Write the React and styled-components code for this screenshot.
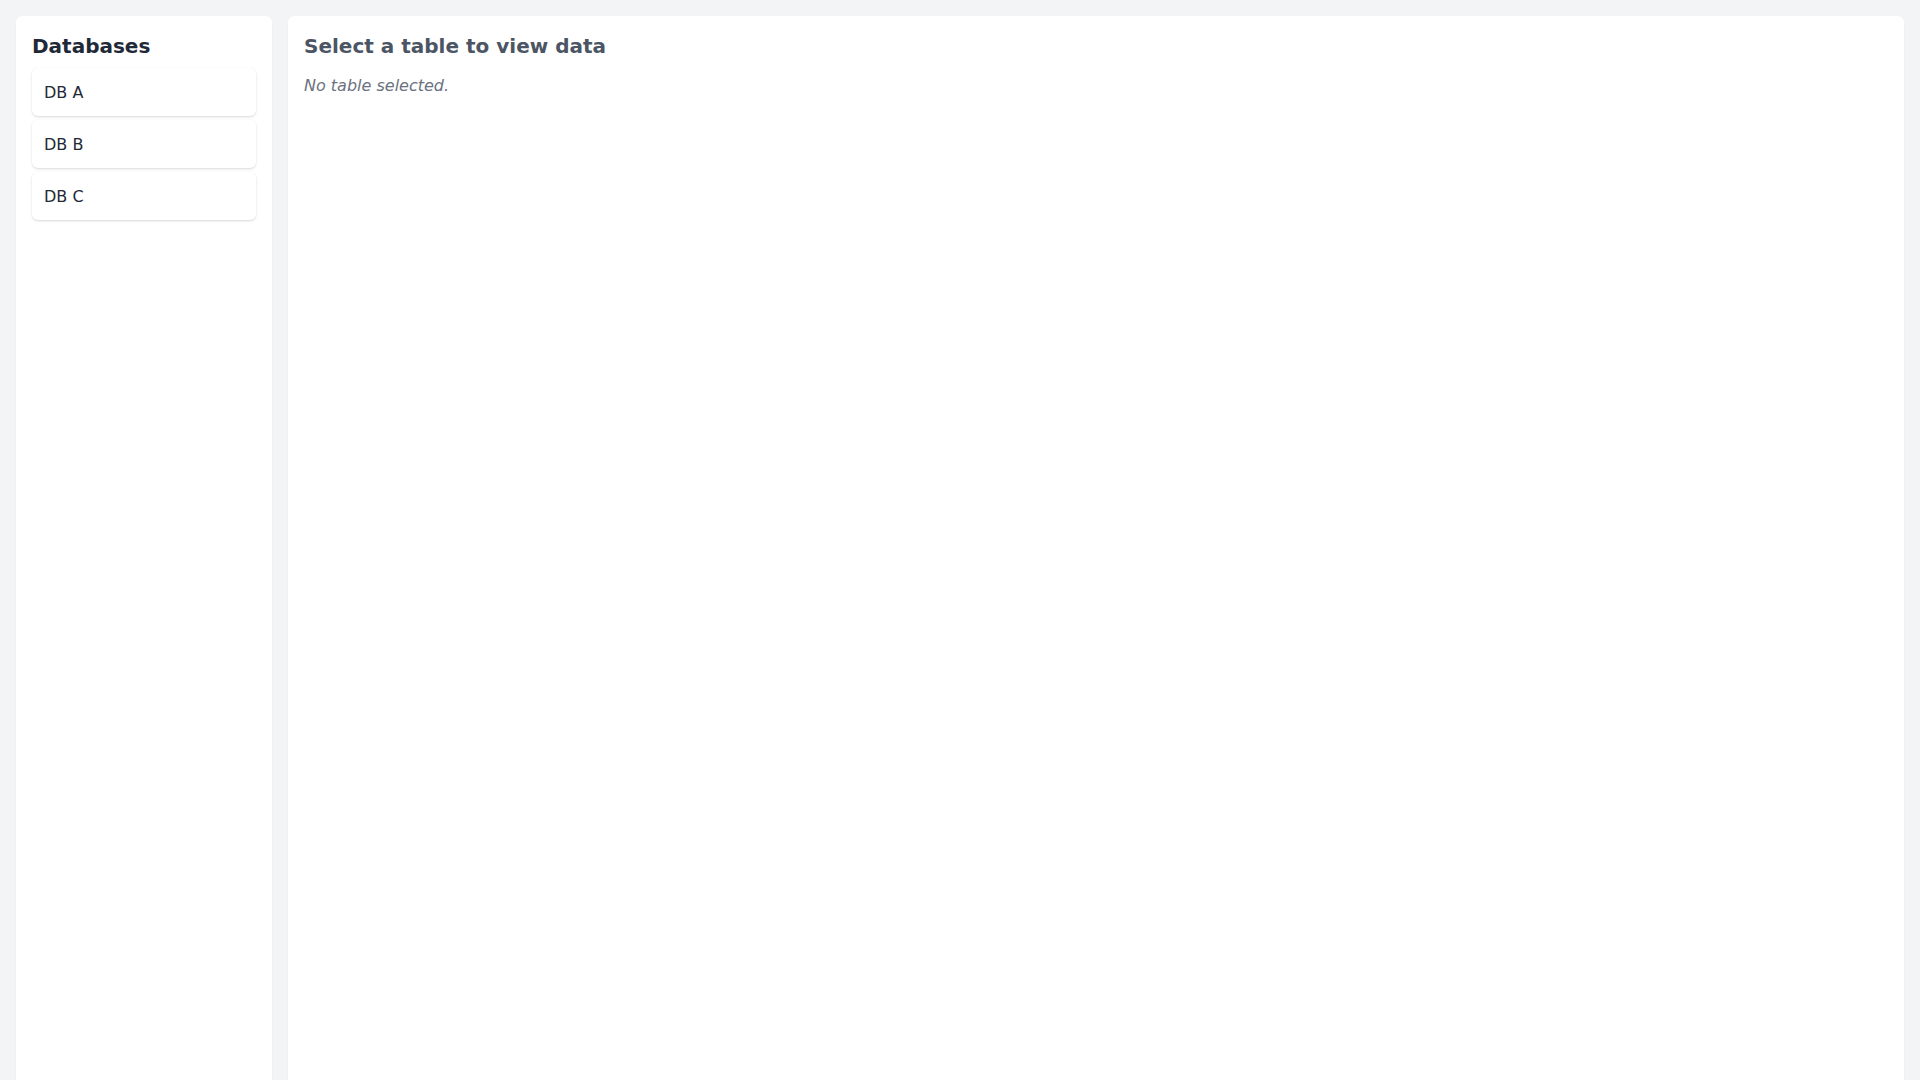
import React from 'react';
import styled, { createGlobalStyle } from 'styled-components';

const Global = createGlobalStyle`
  * { box-sizing: border-box; }
  body {
    margin: 0;
    background: #f3f4f6;
    font-family: "DejaVu Sans", sans-serif;
    color: #1f2937;
  }
`;

const Layout = styled.div`
  display: flex;
  gap: 16px;
  padding: 16px;
  min-height: calc(100vh + 32px);
`;

const Sidebar = styled.aside`
  width: 256px;
  flex-shrink: 0;
  background: #fff;
  border-radius: 6px;
  padding: 16px;
  box-shadow: 0 1px 2px rgba(0, 0, 0, 0.05);
`;

const Title = styled.h2`
  margin: 0 0 8px;
  font-size: 20px;
  line-height: 28px;
  font-weight: bold;
  color: ${p => p.muted ? '#4b5563' : '#1f2937'};
`;

const List = styled.div`
  display: flex;
  flex-direction: column;
  gap: 4px;
`;

const Item = styled.div`
  height: 48px;
  padding: 0 12px;
  display: flex;
  align-items: center;
  font-size: 16px;
  background: #fff;
  border-radius: 6px;
  box-shadow: 0 1px 3px rgba(0, 0, 0, 0.1), 0 1px 2px rgba(0, 0, 0, 0.06);
  cursor: pointer;
`;

const Main = styled.main`
  flex: 1;
  background: #fff;
  border-radius: 6px;
  padding: 16px;
  box-shadow: 0 1px 2px rgba(0, 0, 0, 0.05);
`;

const Empty = styled.p`
  margin: 16px 0 0;
  font-style: italic;
  font-size: 16px;
  color: #6b7280;
`;

export default function App() {
  return (
    <>
      <Global />
      <Layout>
        <Sidebar>
          <Title>Databases</Title>
          <List>
            {['DB A', 'DB B', 'DB C'].map(db => <Item key={db}>{db}</Item>)}
          </List>
        </Sidebar>
        <Main>
          <Title muted>Select a table to view data</Title>
          <Empty>No table selected.</Empty>
        </Main>
      </Layout>
    </>
  );
}
